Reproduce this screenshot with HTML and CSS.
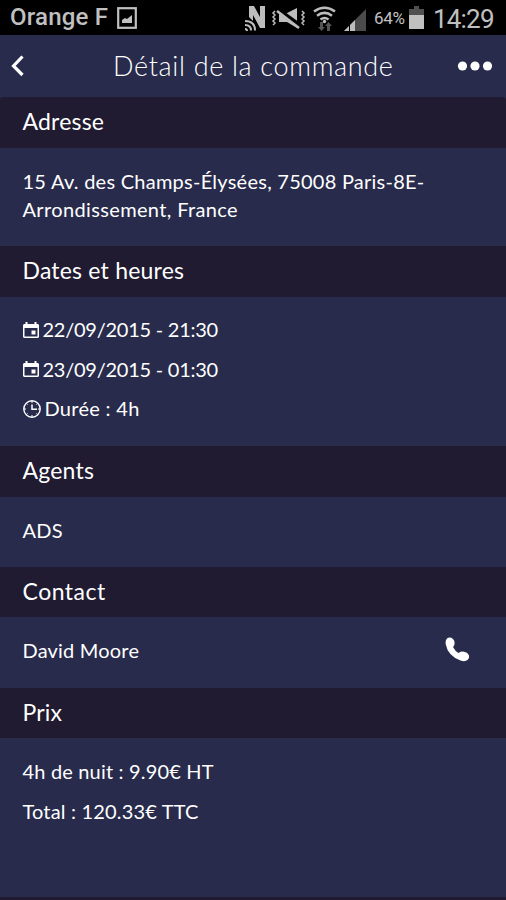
FILE: index.html
```html
<!DOCTYPE html>
<html lang="fr">
<head>
<meta charset="utf-8">
<title>Détail de la commande</title>
<link rel="stylesheet" href="styles.css">
</head>
<body>
<div class="status">
  <span class="carrier">Orange F</span>
  <svg class="shot" width="20" height="22" viewBox="0 0 20 22"><rect x="1.2" y="1.2" width="17.6" height="19.6" fill="none" stroke="#c0c0c0" stroke-width="2.2"/><path d="M5 16V13l3-2 2 1 5-4v8z" fill="#c0c0c0"/></svg>
  <svg class="signals" width="122" height="30" viewBox="0 0 122 30">
    <g fill="#bdbdbd"><path d="M4 14V3h5l6 11V3h5v22h-5L8 12v6z"/><path d="M52 5v20L42 19h-8V10h8z"/></g>
    <g fill="none" stroke="#bdbdbd">
      <path d="M0 18q10 0 10 9.500M0 22q6 0 6 5.500M0 26q2 0 2 2" stroke-width="2"/>
      <path d="M30 8l-2 2 2 2-2 2 2 2-2 2 2 2-2 2M57 8l2 2-2 2 2 2-2 2 2 2-2 2 2 2" stroke-width="1.500"/>
    </g>
    <path d="M33 7L55 23" stroke="#000" stroke-width="5"/><path d="M32 8L54 25" stroke="#bdbdbd" stroke-width="2.600"/>
    <g fill="none" stroke="#bdbdbd" stroke-width="2.600"><path d="M69 8.500q10.500-7.500 21 0M72 12.700q7.500-5.500 15 0M75.500 16.500q4-3 8 0"/></g>
    <circle cx="79.500" cy="18.500" r="1.700" fill="#bdbdbd"/>
    <path d="M75 19h3v5h2l-3.500 4-3.500-4h2zM82 28h3v-5h2l-3.500-4-3.500 4h2z" fill="#555"/>
    <path d="M99 28l22-22v22z" fill="#4b4b4b"/><path d="M99 28l11-11v11z" fill="#bdbdbd"/><path d="M104.500 21v7" stroke="#000"/>
  </svg>
  <span class="percent">64%</span>
  <svg class="battery" width="15" height="24" viewBox="0 0 15 24"><path d="M0 3h5V0h5v3h5v7H0z" fill="#505050"/><path d="M0 9h15v14H0z" fill="#c0c0c0"/></svg>
  <span class="clock">14:29</span>
</div>
<header class="bar">
  <svg class="back" width="14" height="22" viewBox="0 0 14 22"><path d="M11.500 1.500L2.500 11l9 9" fill="none" stroke="#fff" stroke-width="3.200"/></svg>
  <h1><span>Détail de la commande</span></h1>
  <svg class="more" width="36" height="10" viewBox="0 0 36 10" fill="#fff"><circle cx="5.500" cy="5" r="4.600"/><circle cx="18" cy="5" r="4.600"/><circle cx="30.500" cy="5" r="4.600"/></svg>
</header>
<main>
  <h2 class="first">Adresse</h2>
  <section class="address"><p class="street">15 Av. des Champs-Élysées, 75008 Paris-8E-</p><p class="city">Arrondissement, France</p></section>
  <h2>Dates et heures</h2>
  <section class="dates">
    <p><svg class="cal" width="16" height="17" viewBox="0 0 16 17"><path d="M2.500 0h2v2h7V0h2v2H15l1 1v12l-1 1H1l-1-1V3l1-1h1.500z" fill="#fff"/><path d="M1.500 6h13v8.500h-13z" fill="#282b4b"/><path d="M8.500 8.500h4v4h-4z" fill="#fff"/></svg><span>22/09/2015 - 21:30</span></p>
    <p><svg class="cal" width="16" height="17" viewBox="0 0 16 17"><path d="M2.500 0h2v2h7V0h2v2H15l1 1v12l-1 1H1l-1-1V3l1-1h1.500z" fill="#fff"/><path d="M1.500 6h13v8.500h-13z" fill="#282b4b"/><path d="M8.500 8.500h4v4h-4z" fill="#fff"/></svg><span>23/09/2015 - 01:30</span></p>
    <p><svg class="time" width="18" height="18" viewBox="0 0 18 18" fill="none" stroke="#fff"><circle cx="9" cy="9" r="8.200" stroke-width="1.400"/><path d="M9 4.500V9.200h5" stroke-width="1.500"/><path d="M9 1v2M9 15v2M1 9h2M15 9h2M4.500 13.500l-1 1M13.500 13.500l1 1M4.500 4.500l-1-1M13.500 4.500l1-1"/></svg><span class="duration">Durée : 4h</span></p>
  </section>
  <h2>Agents</h2>
  <section class="agents"><p>ADS</p></section>
  <h2 class="wide">Contact</h2>
  <section class="contact"><p>David Moore</p><svg width="25" height="26" viewBox="0 0 25 26"><path d="M2 1.500Q5-.5 8 2q2 2 1.500 5-.2 2-1.500 3 2 4 5.500 6 2.500-2 5.500-1.300 3.500.5 4.800 3.300 1 3-1.300 5-2.500 2-7 .500Q3 19 .8 7.500 0 3.500 2 1.500z" fill="#fff"/></svg></section>
  <h2>Prix</h2>
  <section class="price"><p>4h de nuit : 9.90€ HT</p><p>Total : 120.33€ TTC</p></section>
</main>
</body>
</html>
```
FILE: styles.css
```css
* { box-sizing: border-box; }
body { margin: 0; width: 506px; height: 900px; overflow: hidden; background: #282b4b; color: #fff; font-family: Lato, "Open Sans", sans-serif; }
h1, h2, p { margin: 0; font-weight: 400; }
svg { display: block; flex: none; }
span, p, h1, h2 { white-space: nowrap; }

.status { display: flex; align-items: center; height: 35px; padding-left: 10px; background: #000; color: #c0c0c0; font-family: Roboto, sans-serif; }
.carrier { width: 107px; padding-bottom: 1px; font-size: 24px; font-weight: 500; letter-spacing: .2px; }
.shot { margin-top: 1px; }
.signals { margin: 0 7px 0 108px; }
.percent { width: 35px; font-size: 17px; letter-spacing: -.3px; }
.clock { margin-left: 9px; padding-top: 2px; font-size: 26px; letter-spacing: -.8px; }

.bar { display: flex; align-items: center; height: 62px; padding: 0 13px 0 11px; }
.bar h1 { flex: 1; padding: 0 0 2px 88px; font-size: 27px; font-weight: 300; letter-spacing: .67px; }

h2 { height: 50.7px; padding-left: 22.5px; background: #201b31; font-size: 23px; line-height: 49px; letter-spacing: .2px; }
.wide { letter-spacing: .5px; }
.first { border-radius: 3px 3px 0 0; }
section { padding-left: 22.5px; font-size: 20px; letter-spacing: .2px; }
.address { height: 98.5px; padding-top: 19px; line-height: 28px; }
.street { letter-spacing: .25px; }
.city { letter-spacing: .36px; }
.dates { height: 149px; padding-top: 13.5px; }
.dates p { display: flex; align-items: center; height: 39.5px; }
.dates span { margin-left: 4px; padding-bottom: 2px; letter-spacing: -.25px; }
.dates .duration { letter-spacing: .3px; }
.agents { height: 70px; line-height: 67px; }
.contact { display: flex; align-items: center; justify-content: space-between; height: 70.3px; padding: 0 36px 4px 22.5px; }
.price { height: 158.7px; padding-top: 14px; line-height: 39.5px; letter-spacing: .17px; }
main { border-bottom: 3px solid #201b31; }
```
